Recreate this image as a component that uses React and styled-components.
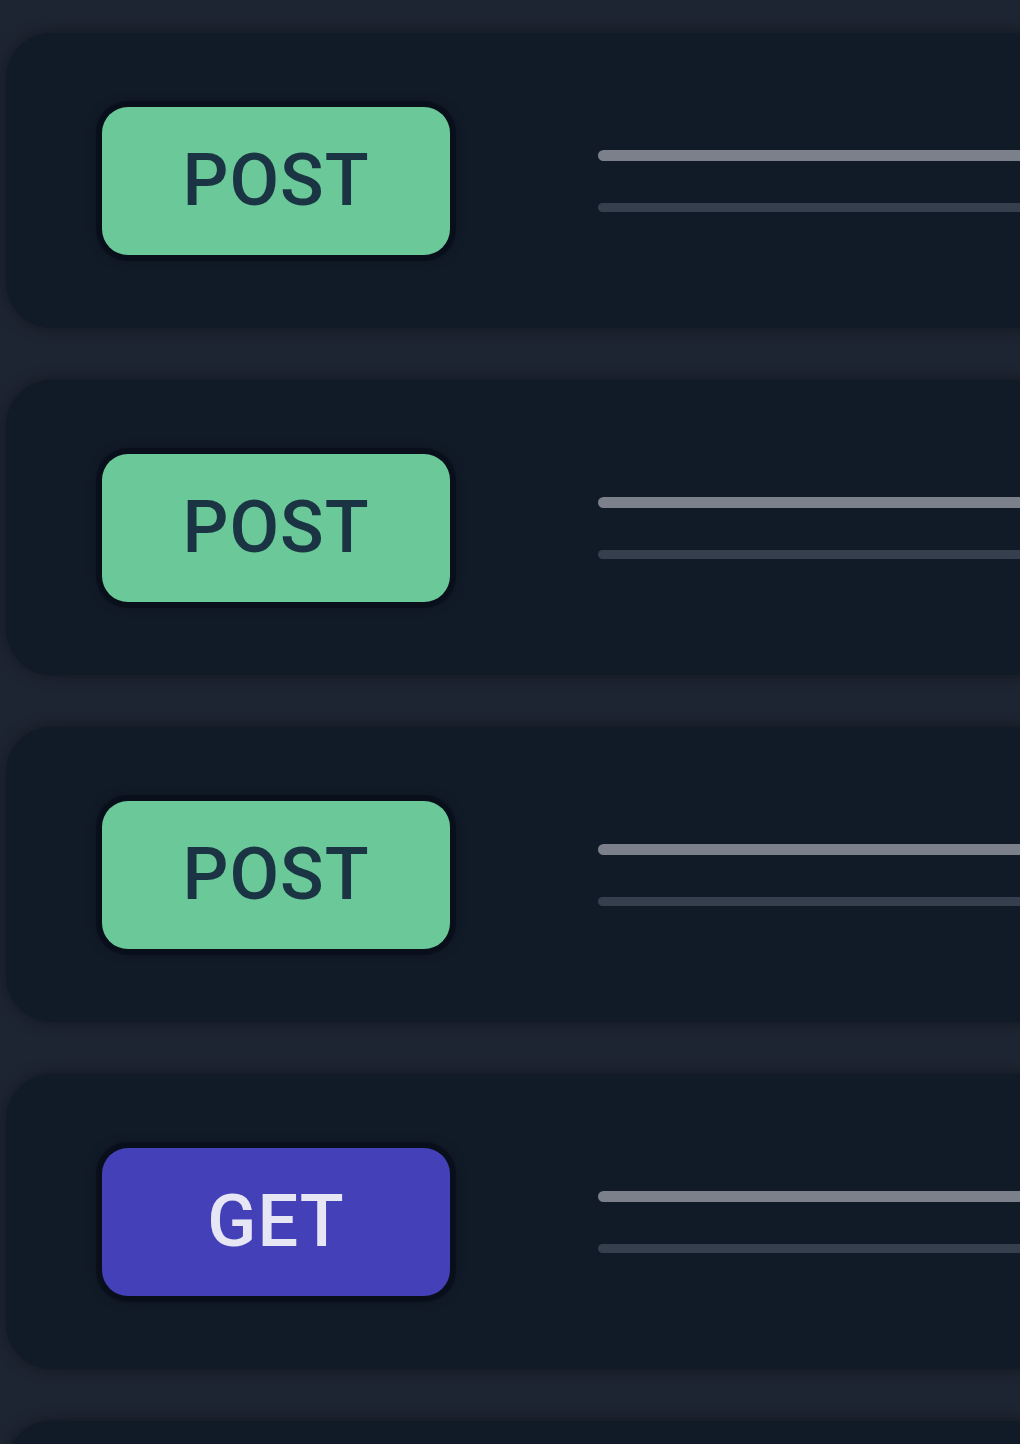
import React from 'react';
import styled, { createGlobalStyle } from 'styled-components';

const GlobalStyle = createGlobalStyle`
  html, body {
    margin: 0;
    padding: 0;
    background: #1e2532;
    overflow: hidden;
  }
`;

const List = styled.div`
  display: flex;
  flex-direction: column;
  gap: 52px;
  padding: 33px 0 0 6px;
  width: 1100px;
  height: 1444px;
  overflow: hidden;
  box-sizing: border-box;
  font-family: Roboto, 'Noto Sans', sans-serif;
`;

const Row = styled.div`
  display: flex;
  flex: none;
  align-items: center;
  height: 295px;
  padding-left: 96px;
  background: #111a27;
  border-radius: 46px;
  box-shadow: 0 0 14px rgba(8, 12, 20, 0.55);
`;

const Badge = styled.span`
  display: flex;
  align-items: center;
  justify-content: center;
  flex: none;
  width: 348px;
  height: 148px;
  border-radius: 26px;
  background: ${p => (p.$method === 'GET' ? '#4440b8' : '#6bc899')};
  color: ${p => (p.$method === 'GET' ? '#e6e6f5' : '#1b3444')};
  box-shadow: 0 0 0 6px rgba(6, 11, 22, 0.6), 0 0 14px rgba(4, 8, 16, 0.6);
  font-size: 72px;
  font-weight: 500;
  letter-spacing: 1px;
  line-height: 1;
`;

const Lines = styled.div`
  display: flex;
  flex-direction: column;
  gap: 42px;
  flex: 1;
  margin-left: 148px;
`;

const Bar = styled.div`
  height: ${p => (p.$faint ? 9 : 11)}px;
  border-radius: 6px;
  background: ${p => (p.$faint ? '#363f4d' : '#7b808a')};
`;

const routes = ['POST', 'POST', 'POST', 'GET', null];

export default function App() {
  return (
    <>
      <GlobalStyle />
      <List>
        {routes.map((method, i) => (
          <Row key={i}>
            {method && (
              <>
                <Badge $method={method}>{method}</Badge>
                <Lines>
                  <Bar />
                  <Bar $faint />
                </Lines>
              </>
            )}
          </Row>
        ))}
      </List>
    </>
  );
}
